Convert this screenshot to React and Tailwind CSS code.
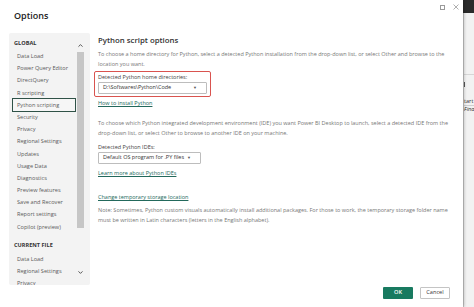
import { ChevronUp, ChevronDown } from 'lucide-react';

const globalItems = [
  'Data Load',
  'Power Query Editor',
  'DirectQuery',
  'R scripting',
  'Python scripting',
  'Security',
  'Privacy',
  'Regional Settings',
  'Updates',
  'Usage Data',
  'Diagnostics',
  'Preview features',
  'Save and Recover',
  'Report settings',
  'Copilot (preview)',
];

const fileItems = ['Data Load', 'Regional Settings', 'Privacy'];

function NavItem({ label, active }) {
  return (
    <div
      className={
        'mx-[4px] w-[62px] h-[12.2px] px-[4px] leading-[12.2px] whitespace-nowrap text-[5.6px] text-[#5a5a5a] ' +
        (active ? 'outline-[1.5px] outline-solid outline-[#2f5247] bg-[#f6f6f6]' : '')
      }
    >
      {label}
    </div>
  );
}

function Select({ value, width }) {
  return (
    <div className={`${width} h-[12px] mt-[1px] flex items-center justify-between pl-[4px] pr-[9px] border border-[#bdbdbd] bg-white rounded-[1px]`}>
      <span className="text-[5.5px] text-[#333] whitespace-nowrap leading-none">{value}</span>
      <span className="text-[4px] text-[#555] leading-none">▼</span>
    </div>
  );
}

export default function App() {
  return (
    <div
      className="w-[474px] h-[307px] flex overflow-hidden bg-[#f0f0f0]"
      style={{ fontFamily: '"Open Sans", "Noto Sans", sans-serif' }}
    >
      {/* dialog */}
      <div className="w-[463px] h-full flex flex-col bg-white shadow-[1px_0_3px_rgba(0,0,0,0.25)] z-10">
        <div className="h-[33px] flex items-start justify-between">
          <div className="pl-[14px] pt-[10px] text-[9px] leading-[12px] font-semibold text-[#222]">Options</div>
          <div className="flex items-center gap-[8px] pt-[4px] pr-[4px]">
            <div className="w-[5px] h-[5px] border border-[#9a9a9a]" />
            <svg width="6" height="6" viewBox="0 0 6 6" className="stroke-[#9a9a9a]">
              <path d="M0.5 0.5L5.5 5.5M5.5 0.5L0.5 5.5" strokeWidth="0.8" />
            </svg>
          </div>
        </div>

        <div className="flex-1 flex">
          {/* nav */}
          <div className="ml-[9px] w-[81px] h-[252px] relative overflow-hidden rounded-[2px] bg-[#f3f3f3] pt-[4px]">
            <div className="pl-[5px] h-[12px] leading-[12px] text-[5.6px] font-bold text-[#333]">GLOBAL</div>
            <div className="mt-[1px]">
              {globalItems.map((it) => (
                <NavItem key={it} label={it} active={it === 'Python scripting'} />
              ))}
            </div>
            <div className="mt-[6px] pl-[5px] h-[12px] leading-[12px] text-[5.6px] font-bold text-[#333]">CURRENT FILE</div>
            <div className="mt-[2px]">
              {fileItems.map((it) => (
                <NavItem key={it + 'f'} label={it} />
              ))}
            </div>
            {/* scrollbar */}
            <ChevronUp size={7} strokeWidth={3} className="absolute left-[68px] top-[9px] text-[#444]" />
            <div className="absolute left-[68px] top-[19px] w-[7px] h-[176px] bg-[#c6c6c6]" />
            <ChevronDown size={7} strokeWidth={3} className="absolute left-[68px] top-[236px] text-[#444]" />
          </div>

          {/* content */}
          <div className="flex-1 flex flex-col pl-[8px] pr-[13px] pb-[8px]">
            <div className="mt-[2px] h-[10px] leading-[10px] text-[7.8px] font-semibold text-[#333] whitespace-nowrap">
              Python script options
            </div>
            <div className="mt-[4px] text-[5.5px] leading-[10px] text-[#777] whitespace-nowrap">
              <div>To choose a home directory for Python, select a detected Python installation from the drop-down list, or select Other and browse to the</div>
              <div>location you want.</div>
            </div>

            <div className="mt-[2px] -ml-[4px] w-[117px] h-[26px] border-[1.5px] border-[#d9534f] rounded-[2px] pl-[3px]">
              <div className="h-[8px] leading-[8px] mt-[0.5px] text-[5.5px] text-[#444] whitespace-nowrap">Detected Python home directories:</div>
              <Select value="D:\Softwares\Python\Code" width="w-[109px]" />
            </div>

            <div className="mt-[2px] h-[8px] leading-[8px] text-[5.5px] text-[#23695c] underline whitespace-nowrap">How to install Python</div>

            <div className="mt-[11px] text-[5.5px] leading-[10px] text-[#777] whitespace-nowrap">
              <div>To choose which Python integrated development environment (IDE) you want Power BI Desktop to launch, select a detected IDE from the</div>
              <div>drop-down list, or select Other to browse to another IDE on your machine.</div>
            </div>

            <div className="mt-[5px] h-[8px] leading-[8px] text-[5.5px] text-[#444] whitespace-nowrap">Detected Python IDEs:</div>
            <Select value="Default OS program for .PY files" width="w-[103px]" />

            <div className="mt-[5px] h-[8px] leading-[8px] text-[5.5px] text-[#23695c] underline whitespace-nowrap">Learn more about Python IDEs</div>

            <div className="mt-[16px] h-[8px] leading-[8px] text-[5.5px] text-[#23695c] underline whitespace-nowrap">Change temporary storage location</div>

            <div className="mt-[4px] text-[5.5px] leading-[10px] text-[#777] whitespace-nowrap">
              <div>Note: Sometimes, Python custom visuals automatically install additional packages. For those to work, the temporary storage folder name</div>
              <div>must be written in Latin characters (letters in the English alphabet).</div>
            </div>

            <div className="mt-auto flex justify-end gap-[7px]">
              <button className="w-[30px] h-[12px] rounded-[1px] bg-[#187a60] text-white text-[5.6px] font-semibold leading-none">OK</button>
              <button className="w-[30px] h-[12px] rounded-[1px] bg-white border border-[#c4c4c4] text-[#333] text-[5.6px] leading-none">Cancel</button>
            </div>
          </div>
        </div>
      </div>

      {/* background app strip */}
      <div className="flex-1 flex flex-col overflow-hidden">
        <div className="h-[13px] bg-[#2b2b2b]" />
        <div className="flex-1 bg-[#f2f2f2] border-l border-[#c8c8c8] relative">
          <div className="mt-[61px] h-px bg-[#d6d6d6]" />
          <div className="mt-[7px] h-[5px] w-px bg-[#555]" />
          <div className="mt-[11px] text-[5.6px] leading-[7px] text-[#333] whitespace-nowrap">tart</div>
          <div className="border-t border-[#d0d0d0] text-[5.6px] leading-[7px] italic text-[#333] whitespace-nowrap">Fina</div>
        </div>
      </div>
    </div>
  );
}
